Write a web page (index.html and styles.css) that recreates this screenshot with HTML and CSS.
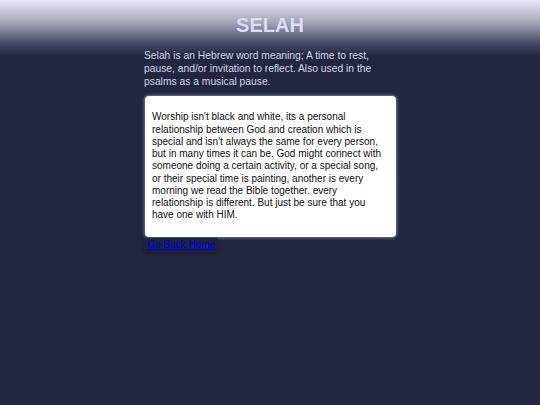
FILE: index.html
```html
<!DOCTYPE html>
<html lang="en">
<head>
  <meta charset="UTF-8" />
  <meta name="viewport" content="width=device-width, initial-scale=1.0" />
  <title>Selah</title>
  <link rel="stylesheet" href="styles.css">
</head>
<body>
  <header class="top">
    <h1>SELAH</h1>
  </header>
  <main class="page">
    <p class="intro">Selah is an Hebrew word meaning; A time to rest, pause, and/or invitation to reflect. Also used in the psalms as a musical pause.</p>
    <div class="card">
      <p>Worship isn't black and white, its a personal relationship between God and creation which is special and isn't always the same for every person, but in many times it can be. God might connect with someone doing a certain activity, or a special song, or their special time is painting, another is every morning we read the Bible together. every relationship is different. But just be sure that you have one with HIM.</p>
    </div>
    <a class="home-link" href="#">Go Back Home</a>
  </main>
</body>
</html>
```

FILE: styles.css
```css
html, body { height: 100%; }
body {
  margin: 0;
  font-family: "Liberation Sans", Arial, sans-serif;
  background: linear-gradient(to bottom, #e8e8f9 0px, #a6a6ba 22px, #4c4f69 42px, #22263f 56px) #22263f;
}
.top {
  height: 50px;
  display: flex;
  justify-content: center;
  align-items: center;
}
.top h1 {
  margin: 0;
  font-size: 20px;
  color: #dcdcf2;
}
.page { width: 252px; margin: 0 auto; }
.intro {
  margin: 0;
  font-size: 10.3px;
  line-height: 12.75px;
  color: #d4d4e6;
}
.card {
  margin-top: 8px;
  margin-left: 1px;
  background: #fff;
  border-radius: 4px;
  padding: 5px 7px;
  box-shadow: 0 0 3px 1px rgba(200, 200, 240, 0.5);
}
.card p {
  margin: 10px 0;
  font-size: 10px;
  line-height: 12.25px;
  color: #111;
}
.home-link {
  display: block;
  width: fit-content;
  margin-top: 1px;
  padding: 0 3px;
  font-size: 10px;
  line-height: 14px;
  color: #0000ee;
  background: #1f2238;
  box-shadow: 0 1px 4px rgba(0, 0, 0, 0.25);
}
```
